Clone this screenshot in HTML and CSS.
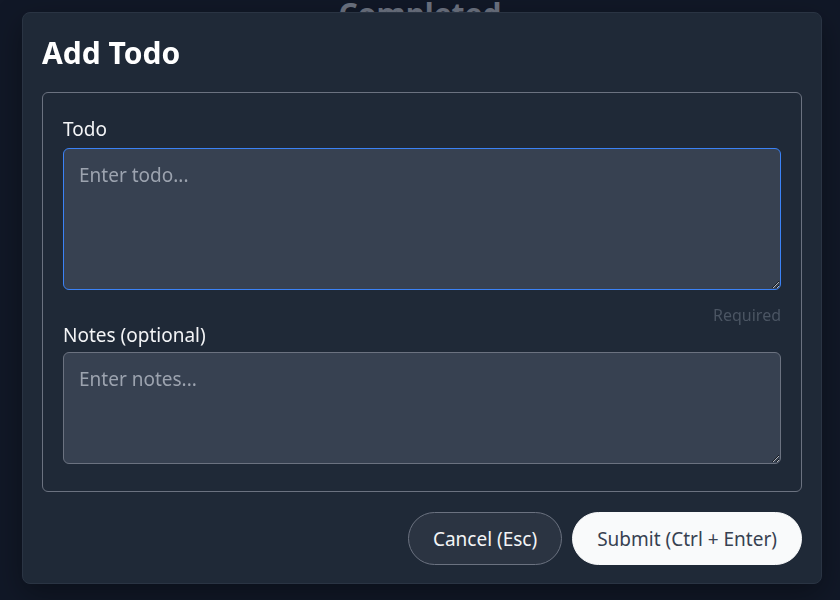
FILE: index.html
```html
<!DOCTYPE html>
<html lang="en">
<head>
<meta charset="utf-8">
<title>Add Todo</title>
<link rel="stylesheet" href="styles.css">
</head>
<body>
  <main class="page">
    <h2 class="section-title">Completed</h2>
  </main>
  <div class="dialog" role="dialog" aria-labelledby="dlg-title">
    <h1 class="dialog-title" id="dlg-title">Add Todo</h1>
    <form class="form">
      <fieldset class="fields">
        <label class="field-label label-todo" for="todo">Todo</label>
        <textarea id="todo" class="input input-todo input-focus" placeholder="Enter todo..."></textarea>
        <div class="hint">Required</div>
        <label class="field-label label-notes" for="notes">Notes (optional)</label>
        <textarea id="notes" class="input input-notes" placeholder="Enter notes..."></textarea>
      </fieldset>
      <div class="actions">
        <button type="button" class="btn btn-cancel">Cancel (Esc)</button>
        <button type="submit" class="btn btn-submit">Submit (Ctrl + Enter)</button>
      </div>
    </form>
  </div>
</body>
</html>
```
FILE: styles.css
```css
* { box-sizing: border-box; }
html, body { margin: 0; padding: 0; }
body {
  width: 840px;
  height: 600px;
  overflow: hidden;
  background: #111827;
  font-family: "Noto Sans", "Open Sans", sans-serif;
  color: #f3f4f6;
}
.page {
  display: flex;
  justify-content: center;
}
.section-title {
  margin: -4px 0 0 0;
  font-size: 30px;
  line-height: 36px;
  font-weight: 700;
  color: #6b7280;
}
.dialog {
  position: fixed;
  left: 22px;
  top: 12px;
  width: 800px;
  background: #1f2937;
  border: 1px solid #2a3443;
  border-radius: 8px;
  padding: 22px 19px 18px 19px;
  box-shadow: 0 10px 30px rgba(0,0,0,0.35);
}
.dialog-title {
  margin: 0 0 21px 0;
  font-size: 30px;
  line-height: 36px;
  font-weight: 700;
  color: #ffffff;
}
.form { margin: 0; }
.fields {
  margin: 0;
  border: 1px solid #6b7280;
  border-radius: 6px;
  padding: 25px 20px 27px 20px;
  display: flex;
  flex-direction: column;
  min-width: 0;
}
.field-label {
  font-size: 19px;
  line-height: 22px;
  color: #f3f4f6;
}
.label-todo { margin-bottom: 8px; }
.label-notes { margin-bottom: 6px; }
.input {
  display: block;
  width: 100%;
  margin: 0;
  background: #374151;
  border: 1px solid #6b7280;
  border-radius: 6px;
  padding: 13px 15px 11px 15px;
  font-family: "Noto Sans", "Open Sans", sans-serif;
  font-size: 19px;
  line-height: 27px;
  color: #f3f4f6;
  outline: none;
}
.input::placeholder { color: #9ca3af; }
.input-focus { border-color: #3b82f6; }
.input-todo { height: 142px; }
.input-notes { height: 112px; }
.hint {
  align-self: flex-end;
  margin-top: 16px;
  font-size: 16px;
  line-height: 18px;
  color: #4b5563;
}
.actions {
  display: flex;
  justify-content: flex-end;
  gap: 10px;
  margin-top: 20px;
}
.btn {
  height: 53px;
  padding: 0 24px;
  border-radius: 27px;
  font-family: "Noto Sans", "Open Sans", sans-serif;
  font-size: 19px;
  cursor: pointer;
}
.btn-cancel {
  background: #2b3442;
  border: 1px solid #6b7280;
  color: #f3f4f6;
}
.btn-submit {
  background: #f9fafb;
  border: 1px solid #f9fafb;
  color: #374151;
}
```
